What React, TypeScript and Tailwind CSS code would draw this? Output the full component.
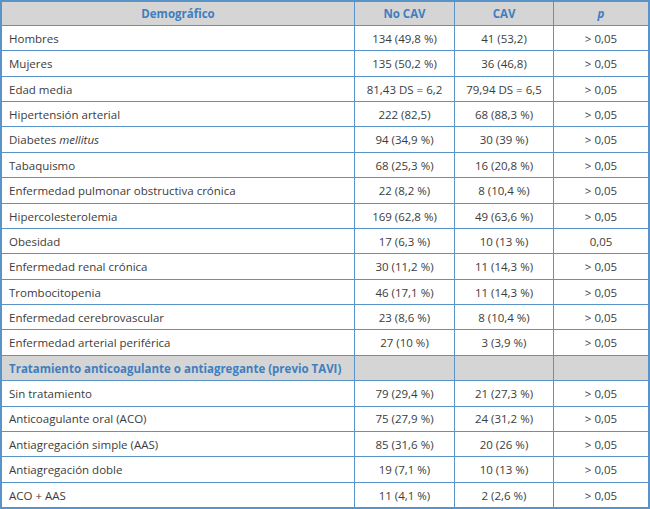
import React from "react";

type Row = { label: React.ReactNode; a: string; b: string; p: string };

const demo: Row[] = [
  { label: "Hombres", a: "134 (49,8 %)", b: "41 (53,2)", p: "> 0,05" },
  { label: "Mujeres", a: "135 (50,2 %)", b: "36 (46,8)", p: "> 0,05" },
  { label: "Edad media", a: "81,43 DS = 6,2", b: "79,94 DS = 6,5", p: "> 0,05" },
  { label: "Hipertensión arterial", a: "222 (82,5)", b: "68 (88,3 %)", p: "> 0,05" },
  { label: <>Diabetes <i>mellitus</i></>, a: "94 (34,9 %)", b: "30 (39 %)", p: "> 0,05" },
  { label: "Tabaquismo", a: "68 (25,3 %)", b: "16 (20,8 %)", p: "> 0,05" },
  { label: "Enfermedad pulmonar obstructiva crónica", a: "22 (8,2 %)", b: "8 (10,4 %)", p: "> 0,05" },
  { label: "Hipercolesterolemia", a: "169 (62,8 %)", b: "49 (63,6 %)", p: "> 0,05" },
  { label: "Obesidad", a: "17 (6,3 %)", b: "10 (13 %)", p: "0,05" },
  { label: "Enfermedad renal crónica", a: "30 (11,2 %)", b: "11 (14,3 %)", p: "> 0,05" },
  { label: "Trombocitopenia", a: "46 (17,1 %)", b: "11 (14,3 %)", p: "> 0,05" },
  { label: "Enfermedad cerebrovascular", a: "23 (8,6 %)", b: "8 (10,4 %)", p: "> 0,05" },
  { label: "Enfermedad arterial periférica", a: "27 (10 %)", b: "3 (3,9 %)", p: "> 0,05" },
];

const trat: Row[] = [
  { label: "Sin tratamiento", a: "79 (29,4 %)", b: "21 (27,3 %)", p: "> 0,05" },
  { label: "Anticoagulante oral (ACO)", a: "75 (27,9 %)", b: "24 (31,2 %)", p: "> 0,05" },
  { label: "Antiagregación simple (AAS)", a: "85 (31,6 %)", b: "20 (26 %)", p: "> 0,05" },
  { label: "Antiagregación doble", a: "19 (7,1 %)", b: "10 (13 %)", p: "> 0,05" },
  { label: "ACO + AAS", a: "11 (4,1 %)", b: "2 (2,6 %)", p: "> 0,05" },
];

const cell = "bg-white flex items-center pt-px text-[#3c3c3c]";
const head = "bg-[#d5d5d5] flex items-center pt-px text-[#3d7fc1] font-bold whitespace-nowrap";

function DataRow({ r }: { r: Row }) {
  return (
    <>
      <div className={`${cell} pl-[7px]`}>
        <span>{r.label}</span>
      </div>
      <div className={`${cell} justify-center`}>{r.a}</div>
      <div className={`${cell} justify-center`}>{r.b}</div>
      <div className={`${cell} justify-center`}>{r.p}</div>
    </>
  );
}

export default function App() {
  return (
    <div
      className="w-[650px] h-[509px] bg-[#5a93c8] border-2 border-[#5a93c8] grid grid-cols-[352px_99px_98px_1fr] grid-rows-[23px_repeat(19,1fr)] gap-px text-[11.5px] leading-none"
      style={{ fontFamily: '"Open Sans", "Noto Sans", sans-serif' }}
    >
      <div className={`${head} justify-center`}>Demográfico</div>
      <div className={`${head} justify-center`}>No CAV</div>
      <div className={`${head} justify-center`}>CAV</div>
      <div className={`${head} justify-center italic`}>p</div>
      {demo.map((r, i) => (
        <DataRow key={i} r={r} />
      ))}
      <div className={`${head} pl-[7px]`}>
        Tratamiento anticoagulante o antiagregante (previo TAVI)
      </div>
      <div className={head}></div>
      <div className={head}></div>
      <div className={head}></div>
      {trat.map((r, i) => (
        <DataRow key={i} r={r} />
      ))}
    </div>
  );
}
